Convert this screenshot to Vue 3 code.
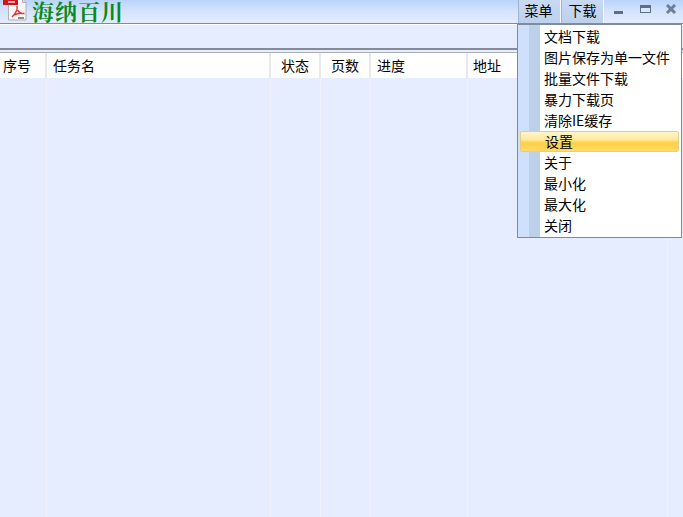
<template>
  <div class="app">
    <header class="titlebar">
      <svg class="logo" width="24" height="23" viewBox="0 0 24 23">
        <path d="M5.500 -1h14l3.500 3.500v17.500h-17.500z" fill="#f6f6f4" stroke="#b0b0b0" />
        <path d="M19.500 -1v3.500h3.500" fill="#ddd" stroke="#b0b0b0" />
        <rect x="0" y="0" width="15" height="5" fill="#d3131a" />
        <rect x="5" y="1" width="7" height="2" fill="#f3b0b0" />
        <path d="M14 6c1 4-2 8-5 11M14.500 10c1 2 3 3.500 7 3.500M11 15c2-1 6-2 9-1.500" fill="none" stroke="#e0353a" stroke-width="1.500" />
        <rect x="15" y="17" width="6" height="2" fill="#8a8a8a" />
      </svg>
      <span class="app-name">海纳百川</span>
      <div class="title-right">
        <button class="tool-btn">菜单</button>
        <button class="tool-btn">下载</button>
        <div class="win-btns">
          <svg width="12" height="12" viewBox="0 0 12 12"><rect x="1" y="7" width="9" height="3" fill="#5d6f88" /></svg>
          <svg width="13" height="12" viewBox="0 0 13 12"><rect x="1.500" y="1.500" width="10" height="7" fill="#dce7fb" stroke="#5d6f88" /><rect x="1" y="1" width="11" height="3" fill="#5d6f88" /></svg>
          <svg width="13" height="12" viewBox="0 0 13 12"><path d="M2 1l8 8M10 1l-8 8" stroke="#6f7f96" stroke-width="3" /></svg>
        </div>
      </div>
    </header>

    <div class="toolbar"></div>

    <div class="table-head">
      <div v-for="col in columns" :key="col.name" class="head-cell" :class="col.cls">{{ col.name }}</div>
    </div>

    <div class="table-body">
      <div v-for="col in columns" :key="col.name" class="body-col" :class="col.cls"></div>
    </div>

    <ul class="menu">
      <li v-for="item in menuItems" :key="item" class="menu-item" :class="{ active: item === '设置' }">{{ item }}</li>
    </ul>
  </div>
</template>

<script setup>
const columns = [
  { name: '序号', cls: 'c-no' },
  { name: '任务名', cls: 'c-name' },
  { name: '状态', cls: 'c-state' },
  { name: '页数', cls: 'c-pages' },
  { name: '进度', cls: 'c-progress' },
  { name: '地址', cls: 'c-url' }
]

const menuItems = [
  '文档下载',
  '图片保存为单一文件',
  '批量文件下载',
  '暴力下载页',
  '清除IE缓存',
  '设置',
  '关于',
  '最小化',
  '最大化',
  '关闭'
]
</script>

<style>
html, body {
  margin: 0;
  background: #e6edff;
}
</style>

<style scoped>
.app {
  position: relative;
  width: 683px;
  height: 517px;
  overflow: hidden;
  display: flex;
  flex-direction: column;
  background: #e6edff;
  font-family: "Noto Sans CJK SC", "Liberation Sans", sans-serif;
  font-size: 14px;
  color: #000;
}

.titlebar {
  height: 23px;
  flex: none;
  display: flex;
  align-items: flex-start;
  background: linear-gradient(#b9d4fb, #d5e4fc 50%, #e3ecfe);
  border-bottom: 1px solid #858a96;
}

.logo {
  margin-left: 3px;
  flex: none;
}

.app-name {
  margin-left: 5px;
  font-family: "Noto Serif CJK SC", "Noto Sans CJK SC", serif;
  font-size: 22px;
  font-weight: 700;
  letter-spacing: 1px;
  line-height: 21px;
  color: #0a8a1e;
}

.title-right {
  margin-left: auto;
  display: flex;
  align-items: stretch;
  height: 23px;
}

.tool-btn {
  width: 43px;
  padding: 0 0 4px;
  border: 0;
  border-left: 1px solid #9fb3d3;
  border-right: 1px solid #f3f7ff;
  background: linear-gradient(#c9d9f3, #bdd0ec);
  font: inherit;
  color: #000;
}

.tool-btn:first-child {
  padding-right: 2px;
}

.win-btns {
  width: 79px;
  display: flex;
  align-items: flex-start;
  justify-content: space-between;
  padding: 4px 5px 0 9px;
  box-sizing: border-box;
}

.toolbar {
  height: 26px;
  flex: none;
  border-top: 1px solid #fff;
  border-bottom: 2px solid #858a96;
  box-sizing: border-box;
}

.table-head {
  height: 25px;
  flex: none;
  margin-top: 2px;
  display: flex;
  background: #fff;
  border-top: 1px solid #a9aebb;
}

.head-cell {
  box-sizing: border-box;
  line-height: 25px;
  border-right: 2px solid #e8e8ec;
  padding-left: 3px;
  flex: none;
}

.c-no { width: 47px; }
.c-name { width: 224px; padding-left: 6px; }
.c-state { width: 50px; padding-left: 10px; }
.c-pages { width: 50px; padding-left: 10px; }
.c-progress { width: 97px; padding-left: 6px; }
.c-url { width: 200px; padding-left: 5px; }

.table-body {
  flex: 1;
  display: flex;
}

.body-col {
  flex: none;
  box-sizing: border-box;
  border-right: 1px solid #eef1fc;
}

.menu {
  position: absolute;
  left: 517px;
  top: 24px;
  width: 165px;
  height: 214px;
  margin: 0;
  padding: 1px 1px;
  box-sizing: border-box;
  list-style: none;
  border: 1px solid #7e8a9e;
  background:
    linear-gradient(90deg, #cfe0fc 0, #cfe0fc 11px, #bcd0ea 11px, #bcd0ea 22px, #fff 22px);
  background-origin: padding-box;
}

.menu-item {
  height: 21px;
  line-height: 21px;
  padding-left: 25px;
  box-sizing: border-box;
  white-space: nowrap;
}

.menu-item.active {
  margin-left: 1px;
  margin-right: 1px;
  padding-left: 24px;
  border: 1px solid #e0cf8c;
  border-radius: 2px;
  line-height: 19px;
  background: linear-gradient(#fff6cf, #ffe999 40%, #ffcf45 58%, #ffdc6a);
}
</style>
